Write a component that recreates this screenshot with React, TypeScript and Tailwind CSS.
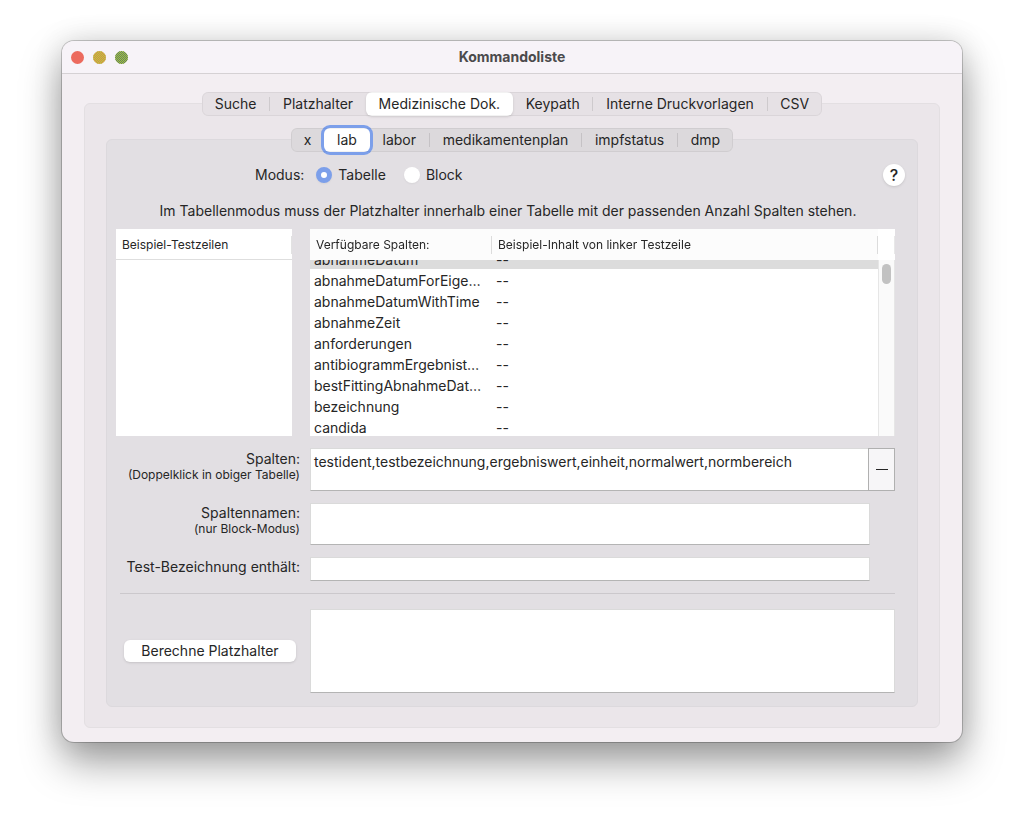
import { useLayoutEffect, useRef, useState } from "react";
import clsx from "clsx";

const mainTabs = [
  "Suche",
  "Platzhalter",
  "Medizinische Dok.",
  "Keypath",
  "Interne Druckvorlagen",
  "CSV",
];

const docTabs = ["x", "lab", "labor", "medikamentenplan", "impfstatus", "dmp"];

const columns = [
  "abnahmeDatum",
  "abnahmeDatumForEigenlabor",
  "abnahmeDatumWithTime",
  "abnahmeZeit",
  "anforderungen",
  "antibiogrammErgebnistext",
  "bestFittingAbnahmeDatum",
  "bezeichnung",
  "candida",
];

interface TabBarProps {
  tabs: string[];
  active: string;
  focused?: boolean;
  className: string;
  onSelect: (tab: string) => void;
}

function TabBar({ tabs, active, focused, className, onSelect }: TabBarProps) {
  const activeIndex = tabs.indexOf(active);

  return (
    <div
      role="tablist"
      className={clsx(
        "mx-auto flex h-6 items-center rounded-md outline-1 -outline-offset-1 outline-black/5",
        className
      )}
    >
      {tabs.map((tab, index) => (
        <div key={tab} className="flex h-full flex-auto items-center">
          <button
            type="button"
            role="tab"
            aria-selected={tab === active}
            onClick={() => onSelect(tab)}
            className={clsx(
              "h-full flex-auto rounded-md px-2 whitespace-nowrap",
              tab === active && "bg-white shadow-sm",
              tab === active && focused && "ring-3 ring-[#7c9fea]"
            )}
          >
            {tab}
          </button>
          {index < tabs.length - 1 &&
            index !== activeIndex &&
            index !== activeIndex - 1 && (
              <span className="h-3.5 w-px bg-black/10" />
            )}
        </div>
      ))}
    </div>
  );
}

// Checkered light: every other pixel of each row gets the second color
function DottedLight({ id, x, color }: { id: string; x: number; color: string }) {
  return (
    <g>
      <clipPath id={id}>
        <circle cx={x + 6.5} cy="7.5" r="6.5" />
      </clipPath>
      <circle cx={x + 6.5} cy="7.5" r="6.5" fill="#a3cc34" />
      <g clipPath={`url(#${id})`} stroke={color} strokeDasharray="1 1">
        {Array.from({ length: 13 }, (_, row) => (
          <line
            key={row}
            x1={x + (row % 2)}
            x2={x + 13}
            y1={row + 1.5}
            y2={row + 1.5}
          />
        ))}
      </g>
    </g>
  );
}

function TrafficLights() {
  return (
    <svg width="60" height="14" viewBox="0 0 60 14" aria-hidden="true">
      <circle cx="7.5" cy="7.5" r="6.5" fill="#ec6a5e" />
      <DottedLight id="light-amber" x={23} color="#ec8a52" />
      <DottedLight id="light-green" x={45} color="#66786a" />
    </svg>
  );
}

function App() {
  const [mainTab, setMainTab] = useState("Medizinische Dok.");
  const [docTab, setDocTab] = useState("lab");
  const [mode, setMode] = useState("Tabelle");
  const scrollRef = useRef<HTMLDivElement>(null);

  useLayoutEffect(() => {
    if (scrollRef.current) {
      scrollRef.current.scrollTop = 12;
    }
  }, []);

  const fieldClass =
    "block w-full resize-none border border-[#dadada] border-b-[#b4b4b4] bg-white px-[3px] outline-none";

  return (
    <div className="min-h-screen bg-white px-[62px] pt-[41px] pb-20 font-[Inter,sans-serif] text-[14px]/[18px] text-[#262626]">
      <div className="rounded-xl bg-[#f3eef2] shadow-[0_0_0_1px_rgba(0,0,0,0.2),0_0_30px_rgba(0,0,0,0.12),0_20px_40px_rgba(0,0,0,0.38)]">
        <header className="grid h-8 grid-cols-[1fr_auto_1fr] items-center rounded-t-xl bg-[#f7f3f8] px-2">
          <TrafficLights />
          <h1 className="text-[14px] font-bold text-[#4b4a4c]">Kommandoliste</h1>
        </header>

        <main className="border-t border-[#d5d1d4] px-[22px] pt-[29px] pb-3.5">
          <section className="rounded-md border border-[#e3dfe2] bg-[#ebe6ea] px-[21px] pb-5">
            <TabBar
              tabs={mainTabs}
              active={mainTab}
              onSelect={setMainTab}
              className="-mt-3 w-[620px] bg-[#e6e1e5]"
            />

            <section className="mt-[23px] rounded-md border border-[#dcd9dd] bg-[#e2dfe3] px-[9px] pb-[13px]">
              <TabBar
                tabs={docTabs}
                active={docTab}
                focused
                onSelect={setDocTab}
                className="-mt-3 w-[442px] bg-[#dcd9dc]"
              />

              <div className="mt-[11px] mr-[3px] flex h-6 items-center">
                <fieldset className="ml-[139px] flex flex-auto items-center">
                  <span className="mr-3">Modus:</span>
                  {["Tabelle", "Block"].map((item) => (
                    <label key={item} className="mr-[18px] flex items-center gap-1.5">
                      <input
                        type="radio"
                        name="mode"
                        value={item}
                        checked={mode === item}
                        onChange={() => setMode(item)}
                        className="size-4 appearance-none rounded-full bg-white shadow-xs checked:border-5 checked:border-[#7c9fea]"
                      />
                      {item}
                    </label>
                  ))}
                </fieldset>
                <button
                  type="button"
                  aria-label="Hilfe"
                  className="size-[22px] rounded-full bg-white text-[16px] font-medium shadow-sm"
                >
                  ?
                </button>
              </div>

              <p className="mt-[15px] mr-2 text-center">
                Im Tabellenmodus muss der Platzhalter innerhalb einer Tabelle mit
                der passenden Anzahl Spalten stehen.
              </p>

              <div className="mt-[9px] mr-[13px] grid h-[207px] grid-cols-[176px_1fr] gap-[18px]">
                <div className="bg-white">
                  <table className="w-full text-left text-[12px]">
                    <thead>
                      <tr className="h-[31px] shadow-[inset_0_-1px_0_#dedede]">
                        <th className="px-1.5 font-normal">Beispiel-Testzeilen</th>
                        <th className="w-px p-0">
                          <div className="h-[18px] w-px bg-[#e2e2e2]" />
                        </th>
                      </tr>
                    </thead>
                  </table>
                </div>

                <div className="flex min-w-0 bg-white">
                  <div
                    ref={scrollRef}
                    className="h-[207px] min-w-0 flex-1 overflow-y-auto [scrollbar-width:none]"
                  >
                    <table className="w-full table-fixed text-left">
                      <thead className="sticky top-0 bg-[#fcfcfc] text-[12px]">
                        <tr className="h-[31px]">
                          <th className="w-[182px] p-0 font-normal">
                            <div className="flex h-[18px] items-center border-r border-[#dcdcdc] px-1.5">
                              Verfügbare Spalten:
                            </div>
                          </th>
                          <th className="p-0 font-normal">
                            <div className="flex h-[18px] items-center border-r border-[#dcdcdc] px-1.5">
                              Beispiel-Inhalt von linker Testzeile
                            </div>
                          </th>
                        </tr>
                      </thead>
                      <tbody>
                        {columns.map((column, index) => (
                          <tr
                            key={column}
                            className={clsx("h-[21px]", index === 0 && "bg-[#dcdcdc]")}
                          >
                            <td className="truncate pt-0.5 pr-1.5 pb-0 pl-1">{column}</td>
                            <td className="pt-0.5 pr-0 pb-0 pl-1">--</td>
                          </tr>
                        ))}
                      </tbody>
                    </table>
                  </div>
                  <div className="flex w-[17px] shrink-0 flex-col">
                    <div className="flex h-[31px] items-center justify-end">
                      <span className="h-[18px] w-px bg-[#e8e8e8]" />
                    </div>
                    <div className="flex-auto border-x border-[#e6e6e6] bg-[#fafafa] px-[3px] pt-1">
                      <div className="h-5 rounded-full bg-[#c2c2c2]" />
                    </div>
                  </div>
                </div>
              </div>

              <form
                className="mt-3 mr-[13px] grid grid-cols-[184px_1fr] gap-x-2.5 gap-y-3"
                onSubmit={(event) => event.preventDefault()}
              >
                <label htmlFor="spalten" className="pt-0.5 text-right">
                  Spalten:
                  <span className="block text-[12px]/[14px]">
                    (Doppelklick in obiger Tabelle)
                  </span>
                </label>
                <div className="flex">
                  <textarea
                    id="spalten"
                    defaultValue="testident,testbezeichnung,ergebniswert,einheit,normalwert,normbereich"
                    className={clsx(fieldClass, "h-[43px] border-r-0 py-1")}
                  />
                  <button
                    type="button"
                    aria-label="Spalte entfernen"
                    className="flex w-[27px] shrink-0 items-center justify-center border border-[#b0b0b0] bg-[#f7f6f8]"
                  >
                    <span className="h-px w-3 bg-[#262626]" />
                  </button>
                </div>

                <label htmlFor="spaltennamen" className="pt-px text-right">
                  Spaltennamen:
                  <span className="block text-[12px]/[14px]">(nur Block-Modus)</span>
                </label>
                <div className="pr-[25px]">
                  <textarea
                    id="spaltennamen"
                    className={clsx(fieldClass, "h-[42px] py-1")}
                  />
                </div>

                <label
                  htmlFor="bezeichnung"
                  className="pt-px text-right whitespace-nowrap"
                >
                  Test-Bezeichnung enthält:
                </label>
                <div className="pr-[25px]">
                  <input
                    id="bezeichnung"
                    type="text"
                    className={clsx(fieldClass, "h-6")}
                  />
                </div>

                <hr className="col-span-2 ml-1 border-[#cbc8cc]" />

                <div className="flex items-center justify-center pt-0.5 pr-1 pl-2">
                  <button
                    type="submit"
                    className="h-[22px] w-full rounded-md bg-white whitespace-nowrap shadow-sm"
                  >
                    Berechne Platzhalter
                  </button>
                </div>
                <div className="pt-[3px]">
                  <textarea
                    aria-label="Platzhalter"
                    className={clsx(fieldClass, "h-21 py-1")}
                  />
                </div>
              </form>
            </section>
          </section>
        </main>
      </div>
    </div>
  );
}

export default App;
